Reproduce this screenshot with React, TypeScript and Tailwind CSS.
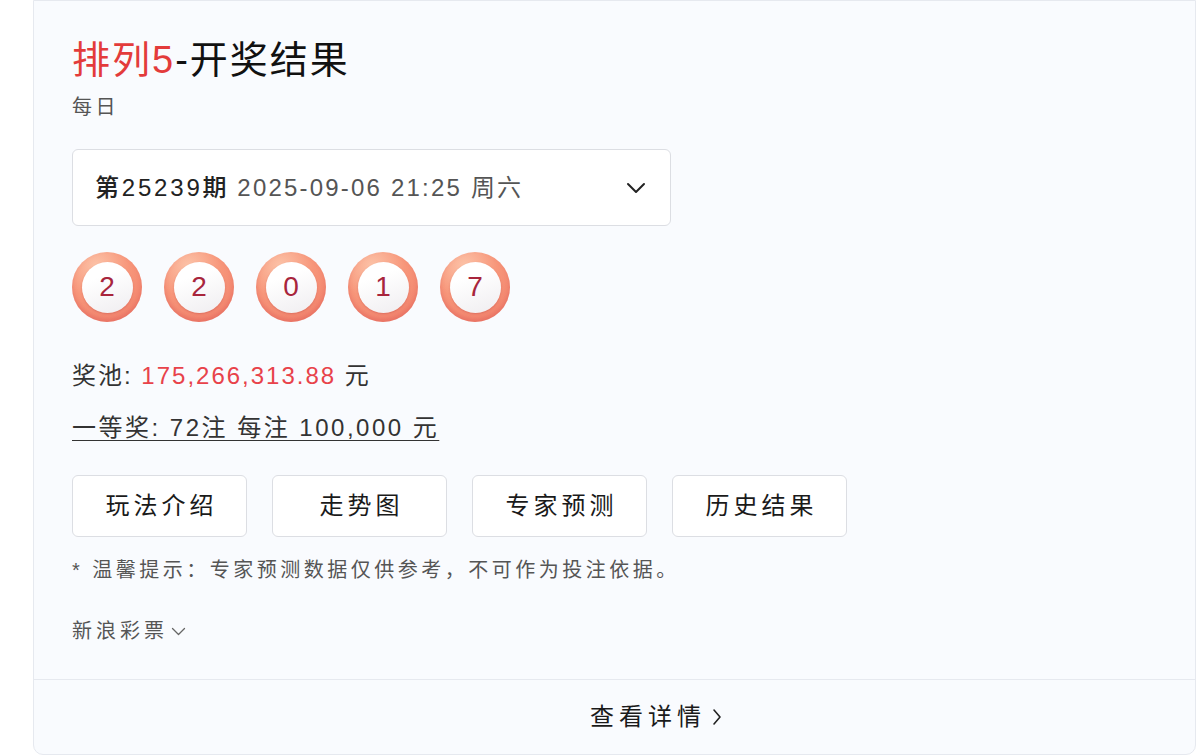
import React from 'react';

const balls = ['2', '2', '0', '1', '7'];
const links = ['玩法介绍', '走势图', '专家预测', '历史结果'];

function Ball({ n }: { n: string }) {
  return (
    <div className="w-[70px] h-[70px] rounded-full flex items-center justify-center bg-[radial-gradient(circle_at_35%_20%,#fcc3a8_0%,#f7967a_45%,#ef7b68_100%)] shadow-[inset_0_-3px_4px_rgba(214,80,80,0.35)]">
      <div className="w-[51px] h-[51px] rounded-full flex items-center justify-center bg-[linear-gradient(160deg,#ffffff_30%,#efedf0_100%)] shadow-[0_1px_2px_rgba(180,60,60,0.35)]">
        <span className="text-[28px] leading-none text-[#a8253c]">{n}</span>
      </div>
    </div>
  );
}

export default function App() {
  return (
    <div
      className="w-[1198px] h-[756px] bg-white overflow-hidden"
      style={{ fontFamily: '"Liberation Sans", "Noto Sans CJK SC", sans-serif' }}
    >
      <div className="ml-[33px] w-[1163px] h-[755px] bg-[#f9fbfe] border border-[#e6e9ef] rounded-b-[10px] flex flex-col">
        <div className="pl-[38px] pt-[36px] pb-[34px] flex flex-col items-start">
          <h1 className="text-[38px] leading-[46px] font-normal text-[#111] tracking-[2px]">
            <span className="text-[#e33b3b]">排列5</span>-开奖结果
          </h1>
          <p className="mt-[10px] text-[20px] leading-[28px] text-[#555] tracking-[3.5px]">每日</p>

          <div className="mt-[28px] w-[599px] h-[77px] bg-white border border-[#dcdee3] rounded-[6px] flex items-center justify-between pl-[22px] pr-[24px]">
            <div className="text-[24px] leading-[32px]">
              <span className="text-[#222] font-medium tracking-[2.8px]">第25239期</span>
              <span className="text-[#555] ml-[8px] tracking-[2.2px]">2025-09-06 21:25 周六</span>
            </div>
            <svg width="20" height="12" viewBox="0 0 20 12" fill="none">
              <path d="M2 2l8 8 8-8" stroke="#222" strokeWidth="2" strokeLinecap="round" strokeLinejoin="round" />
            </svg>
          </div>

          <div className="mt-[26px] flex gap-[22px]">
            {balls.map((b, i) => (
              <Ball key={i} n={b} />
            ))}
          </div>

          <p className="mt-[38px] text-[24px] leading-[32px] text-[#333] tracking-[2px]">
            奖池: <span className="text-[#e8424a]">175,266,313.88</span> 元
          </p>
          <p className="mt-[20px] text-[24px] leading-[32px] text-[#333] tracking-[2.5px] underline underline-offset-[4px] decoration-1">
            一等奖: 72注 每注 100,000 元
          </p>

          <div className="mt-[31px] flex gap-[25px]">
            {links.map((l) => (
              <div
                key={l}
                className="w-[175px] h-[62px] bg-white border border-[#dcdee3] rounded-[6px] flex items-center justify-center text-[24px] text-[#1a1a1a] tracking-[4px] pl-[4px]"
              >
                {l}
              </div>
            ))}
          </div>

          <p className="mt-[19px] text-[20px] leading-[28px] text-[#555] tracking-[3.5px]">
            * 温馨提示：专家预测数据仅供参考，不可作为投注依据。
          </p>

          <div className="mt-[33px] flex items-center gap-[3px] text-[20px] leading-[28px] text-[#555]">
            <span className="tracking-[4px]">新浪彩票</span>
            <svg width="15" height="9" viewBox="0 0 15 9" fill="none">
              <path d="M1.5 1.5l6 6 6-6" stroke="#666" strokeWidth="1.3" strokeLinecap="round" strokeLinejoin="round" />
            </svg>
          </div>
        </div>

        <div className="border-t border-[#e6e9ef] flex-1 flex items-center justify-center pl-[83px]">
          <div className="flex items-center gap-[6px] text-[24px] text-[#1a1a1a]">
            <span className="tracking-[5px]">查看详情</span>
            <svg width="10" height="18" viewBox="0 0 10 18" fill="none">
              <path d="M2 2l6 7-6 7" stroke="#222" strokeWidth="1.6" strokeLinecap="round" strokeLinejoin="round" />
            </svg>
          </div>
        </div>
      </div>
    </div>
  );
}
